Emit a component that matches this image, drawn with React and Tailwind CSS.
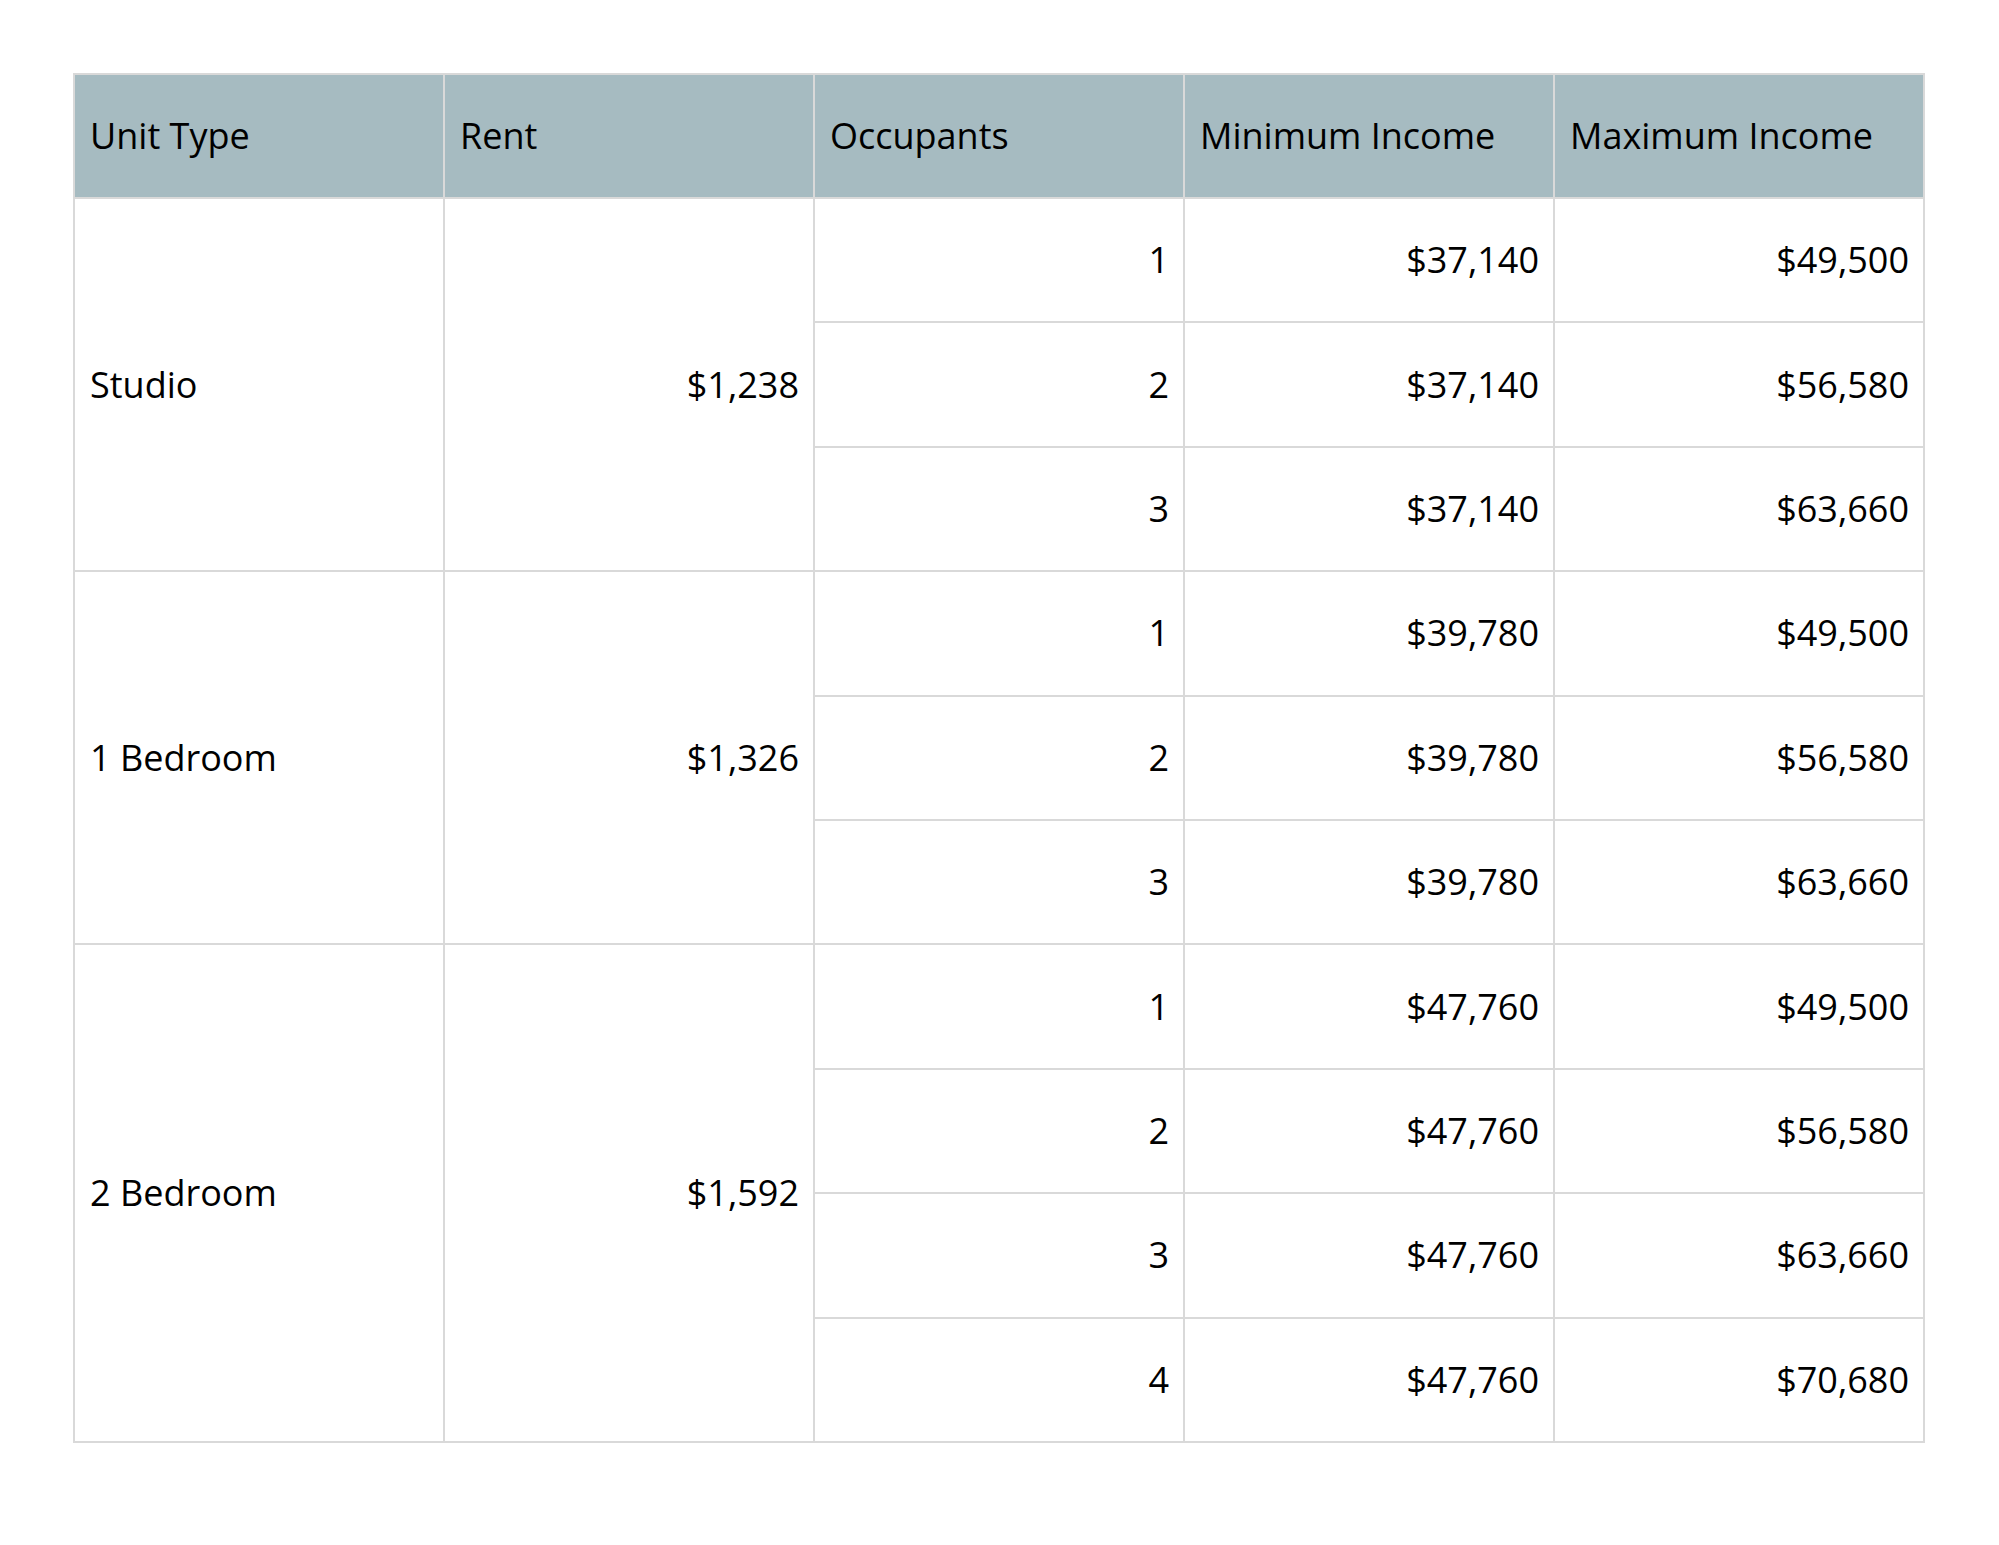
import React from "react";

const groups = [
  {
    type: "Studio",
    rent: "$1,238",
    rows: [
      ["1", "$37,140", "$49,500"],
      ["2", "$37,140", "$56,580"],
      ["3", "$37,140", "$63,660"],
    ],
  },
  {
    type: "1 Bedroom",
    rent: "$1,326",
    rows: [
      ["1", "$39,780", "$49,500"],
      ["2", "$39,780", "$56,580"],
      ["3", "$39,780", "$63,660"],
    ],
  },
  {
    type: "2 Bedroom",
    rent: "$1,592",
    rows: [
      ["1", "$47,760", "$49,500"],
      ["2", "$47,760", "$56,580"],
      ["3", "$47,760", "$63,660"],
      ["4", "$47,760", "$70,680"],
    ],
  },
];

const headers = ["Unit Type", "Rent", "Occupants", "Minimum Income", "Maximum Income"];

export default function App() {
  return (
    <div
      className="w-[1999px] h-[1545px] bg-white pt-[73px] pl-[73px]"
      style={{ fontFamily: '"Open Sans", "Noto Sans", sans-serif' }}
    >
      <table className="table-fixed border-collapse w-[1852px] text-[36px] text-black leading-none">
        <colgroup>
          <col className="w-[370px]" />
          <col className="w-[370px]" />
          <col className="w-[370px]" />
          <col className="w-[370px]" />
          <col className="w-[370px]" />
        </colgroup>
        <thead>
          <tr className="h-[124px] bg-[#a6bbc1]">
            {headers.map((h) => (
              <th
                key={h}
                className="border-2 border-[#d9d9d9] px-[15px] text-left font-normal align-middle"
              >
                {h}
              </th>
            ))}
          </tr>
        </thead>
        <tbody>
          {groups.map((g) =>
            g.rows.map((r, i) => (
              <tr key={g.type + i} className="h-[124.4px]">
                {i === 0 && (
                  <>
                    <td
                      rowSpan={g.rows.length}
                      className="border-2 border-[#d9d9d9] px-[15px] text-left align-middle"
                    >
                      {g.type}
                    </td>
                    <td
                      rowSpan={g.rows.length}
                      className="border-2 border-[#d9d9d9] px-[14px] text-right align-middle"
                    >
                      {g.rent}
                    </td>
                  </>
                )}
                <td className="border-2 border-[#d9d9d9] px-[14px] text-right align-middle">{r[0]}</td>
                <td className="border-2 border-[#d9d9d9] px-[14px] text-right align-middle">{r[1]}</td>
                <td className="border-2 border-[#d9d9d9] px-[14px] text-right align-middle">{r[2]}</td>
              </tr>
            ))
          )}
        </tbody>
      </table>
    </div>
  );
}
